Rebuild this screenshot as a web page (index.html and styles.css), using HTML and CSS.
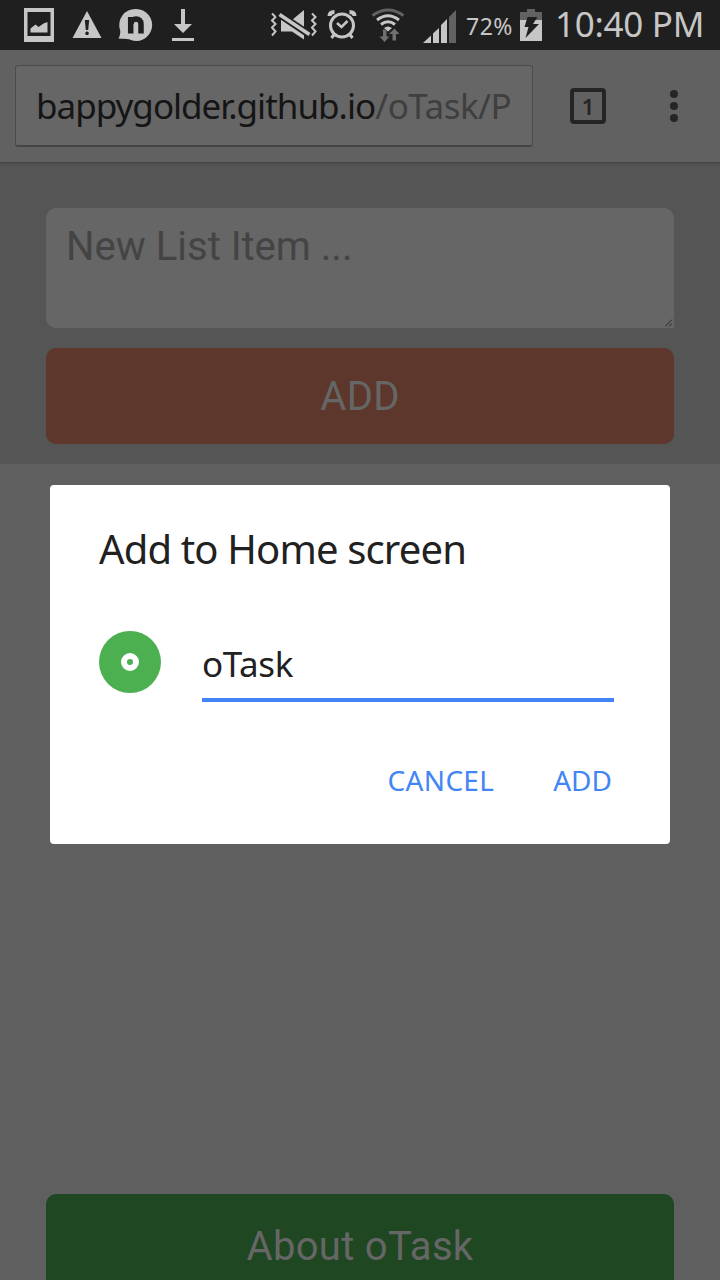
FILE: index.html
```html
<!DOCTYPE html>
<html lang="en">
<head>
<meta charset="utf-8">
<title>oTask</title>
<link rel="stylesheet" href="styles.css">
</head>
<body>
<div class="screen">
  <header class="status">
    <svg class="notifications" width="200" height="50" viewBox="0 0 200 50" fill="#c6c6c6">
      <path fill-rule="evenodd" d="M24 8h30v34H24zM27.500 12v24h23V12z"/>
      <path d="M30.500 32.500v-4l5-4 3 2.500 5-3.500 4-1.500v10.500z"/>
      <path fill-rule="evenodd" d="M87 11l14.500 27h-29zM84.800 20l1 10h2.400l1-10zM87 31.500a1.800 1.800 0 1 0 .1 0z"/>
      <path d="M136 9a16 16 0 1 1-7 30.300c-3-.3-6-.5-10.500-.8 1.500-3 2-5 1.700-8A16 16 0 0 1 136 9z"/>
      <path d="M130.700 33.500V17M131 24c0-6.500 10-7 10 0v9.500" fill="none" stroke="#1f1f1f" stroke-width="5.500"/>
      <path d="M181 9h4v15h7l-9 9-9-9h7zM172 38h22v3h-22z"/>
    </svg>
    <div class="system">
      <svg width="196" height="50" viewBox="268 0 196 50" fill="#c6c6c6">
        <path d="M272 13.500l3.500 3.500-3.500 3.500 3.500 3.500-3.500 3.500 3.500 4-3.500 4M312 13.500l3.500 3.500-3.500 3.500 3.500 3.500-3.500 3.500 3.500 4-3.500 4" fill="none" stroke="#c6c6c6" stroke-width="2"/>
        <path d="M281 20h11l12-10v29.500l-12-8h-11z"/>
        <path d="M278 13.500l32 21.500" stroke="#1f1f1f" stroke-width="7"/>
        <path d="M279.500 14.500l30 20" stroke="#c6c6c6" stroke-width="3.500"/>
        <g fill="none" stroke="#c6c6c6" stroke-width="3">
          <circle cx="342" cy="25.500" r="11.500"/>
          <path d="M329.500 16q0-4 5-4M354.500 16q0-4-5-4" stroke-width="4"/>
          <path d="M334.500 34l-3 4M349.500 34l3 4"/>
          <path d="M337 23l4.500 4 6-6" stroke-width="2.500"/>
        </g>
        <g fill="none" stroke="#c6c6c6" stroke-width="3">
          <path d="M372.500 15.500q15.500-11 31 0" stroke="#626262"/>
          <path d="M377 20q11-8.500 22 0"/>
          <path d="M381 24.500q7-5.500 14 0"/>
        </g>
        <path d="M384 28q4-3 8 0l-4 3.500z"/>
        <path d="M383 29.500h3.500v7h3l-5 5.500-5-5.500h3.500zM392.500 40.500v-6.500H389l5.500-5.500 5 5.500h-3.500v6.500z" fill="#707070"/>
        <path d="M423 43l8-7.500V43zM433 43v-9.500l6-5.500v15zM441 43V25l6-6v24z"/>
        <path d="M449 43V17l7-7v33z" fill="#626262"/>
      </svg>
      <span class="percent">72%</span>
      <svg class="battery" width="22" height="32" viewBox="0 0 22 32">
        <path d="M0 3h7V0h8v3h7v8H0z" fill="#626262"/>
        <path d="M0 11h22v21H0z" fill="#c6c6c6"/>
        <path d="M7.500 8h10l-4.500 7h6L5.500 29 8.500 18H4.500z" fill="#1f1f1f"/>
      </svg>
      <span class="clock">10:40 PM</span>
    </div>
  </header>

  <nav class="toolbar">
    <div class="address"><span class="url">bappygolder.github.io<span class="path">/oTask/P</span></span></div>
    <div class="tabs">1</div>
    <div class="menu"><i></i><i></i><i></i></div>
  </nav>

  <section class="new-item">
    <div class="entry">New List Item ...
      <svg class="grip" width="8" height="8" viewBox="0 0 8 8"><path d="M0 7.500L7 .5M4 7.500L7 4.500" stroke="#252525"/></svg>
    </div>
    <div class="button add"><span>ADD</span></div>
  </section>

  <main class="list">
    <div class="button about"><span>About oTask</span></div>
  </main>

  <div class="dialog">
    <h1 class="title">Add to Home screen</h1>
    <div class="field">
      <svg width="62" height="62" viewBox="0 0 62 62">
        <circle cx="31" cy="31" r="31" fill="#4caf50"/>
        <circle cx="31" cy="31" r="6" fill="none" stroke="#fff" stroke-width="6"/>
      </svg>
      <div class="name"><span>oTask</span></div>
    </div>
    <div class="actions"><span class="cancel">CANCEL</span><span class="confirm">ADD</span></div>
  </div>
</div>
</body>
</html>
```
FILE: styles.css
```css
* { box-sizing: border-box; }
body { margin: 0; font-family: "Noto Sans", sans-serif; }
.screen { position: relative; display: flex; flex-direction: column; width: 720px; height: 1280px; overflow: hidden; background: #5f5f5f; }
.status { display: flex; justify-content: space-between; flex: none; height: 50px; background: #1f1f1f; color: #c6c6c6; white-space: nowrap; }
.notifications { flex: none; }
.system { display: flex; align-items: center; width: 452px; }
.system svg { flex: none; }
.percent { flex: none; width: 56px; padding-left: 2px; font-size: 23px; line-height: 48px; letter-spacing: .5px; padding-top: 2px; }
.battery { margin-top: -1px; }
.clock { margin-left: 13px; font-size: 35px; line-height: 46px; letter-spacing: -.3px; margin-top: -2px; }
.toolbar { display: flex; align-items: center; flex: none; height: 113px; padding: 0 42px 0 15px; background: #616161; border-bottom: 1px solid #464646; }
.address { width: 518px; height: 82px; padding: 0 18px 0 20px; border: 1px solid #4b4b4b; border-bottom: 2px solid #454545; border-radius: 3px; background: #666; }
.url { display: block; overflow: hidden; font-size: 35px; line-height: 80px; letter-spacing: -1px; color: #151515; white-space: nowrap; }
.path { color: #3f3f3f; letter-spacing: -.5px; }
.tabs { width: 36px; height: 36px; margin-left: 37px; border: 4px solid #252525; border-radius: 4px; color: #252525; font-size: 22px; font-weight: 600; line-height: 29px; text-align: center; }
.menu { display: flex; flex-direction: column; gap: 4px; margin-left: auto; }
.menu i { width: 8px; height: 8px; border-radius: 50%; background: #252525; }
.new-item { display: flex; flex-direction: column; gap: 20px; flex: none; height: 301px; padding: 45px 46px 20px; background: #555; box-shadow: inset 0 4px 3px -2px #4d4d4d; font-family: Roboto, sans-serif; }
.entry { position: relative; height: 120px; padding: 15px 20px; border-radius: 10px 10px 0 10px; background: #666; color: #444; font-size: 40px; line-height: 48px; }
.grip { position: absolute; right: 1px; bottom: 1px; }
.button { display: flex; align-items: center; justify-content: center; height: 96px; border-radius: 10px; color: #666; font-family: Roboto, sans-serif; font-size: 40px; letter-spacing: .3px; }
.add { background: #5d372b; }
.list { display: flex; flex-direction: column; flex: 1; padding: 730px 46px 0; }
.about { flex: none; height: 104px; background: #1f4722; }
.dialog { position: absolute; left: 50px; top: 485px; width: 620px; height: 359px; padding: 36px 56px 0 49px; border-radius: 4px; background: #fff; color: #212121; }
.title { margin: 0; font-size: 40px; font-weight: 400; line-height: 56px; letter-spacing: -.85px; white-space: nowrap; }
.field { display: flex; align-items: flex-start; margin-top: 54px; }
.name { width: 412px; height: 71px; margin-left: 41px; border-bottom: 4px solid #4285f4; font-size: 35px; line-height: 66px; letter-spacing: -.4px; }
.actions { display: flex; justify-content: flex-end; gap: 59px; margin-top: 60px; color: #4285f4; font-size: 28px; line-height: 37px; }
.cancel { letter-spacing: .3px; }
.confirm { padding-right: 2px; }
```
